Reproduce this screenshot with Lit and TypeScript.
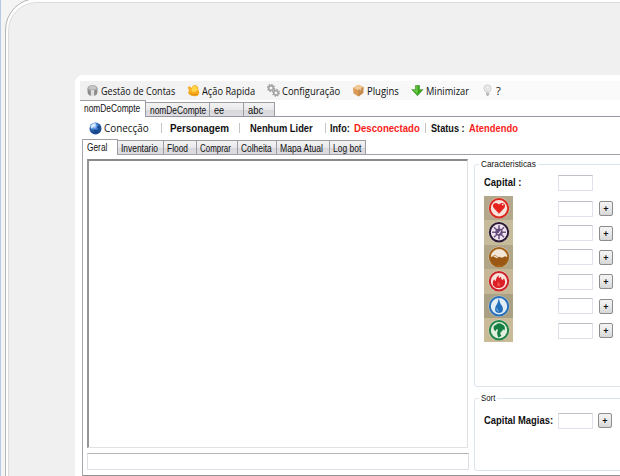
import { LitElement, html, svg, css } from "lit";
import { customElement, property } from "lit/decorators.js";
import { styleMap } from "lit/directives/style-map.js";

/* Single-line label condensed horizontally to a given width. */
@customElement("fit-label")
class FitLabel extends LitElement {
  @property({ type: Number }) w = 0;
  @property() text = "";
  @property({ type: Number }) scale = 1;
  static styles = css`
    :host { display: block; flex: none; }
    .box { display: block; white-space: nowrap; }
    .in { display: inline-block; transform-origin: 0 50%; }
  `;
  firstUpdated() {
    const el = this.renderRoot.querySelector(".in") as HTMLElement;
    this.scale = this.w / el.offsetWidth;
  }
  render() {
    return html`<span class="box" style=${styleMap({ width: this.w + "px" })}
      ><span class="in" style=${styleMap({ transform: `scaleX(${this.scale})` })}>${this.text}</span></span>`;
  }
}

const label = (text: string, w: number) => html`<fit-label .text=${text} .w=${w}></fit-label>`;

const menuIcons: Record<string, unknown> = {
  head: svg`<path d="M1.200 5.500Q1.500 1 6.500 1T11.800 5.500L11.300 9.500Q10 11.500 8.300 12L8.300 7H4.700V12Q3 11.500 1.700 9.500Z" fill="#a2a2a2"/><path d="M2.500 4.500Q3.500 1.600 6.500 1.600T10.500 4.500L8.500 5.500H4.500Z" fill="#c6c6c6"/><path d="M4.700 6H8.300V12H4.700Z" fill="#dedede"/><path d="M2 6.500H4.700V11.500L2.300 10ZM8.300 6.500H11V10L8.300 11.500Z" fill="#888"/>`,
  hand: svg`<path d="M1 3.500Q1.500 1.500 3 2.500L4.500 4Q5.500 1 8 1 11.500 1.500 11.300 5.500L12.300 8.500Q12 12 8 12.200 4 12.300 2.500 10.500L.8 8.700Q.8 7.800 2 7.500Z" fill="#f6a91f"/><path d="M4.500 6Q5 1.800 8 1.800 10.800 2.500 10.500 6 8.500 8.500 5.500 8Z" fill="#ffd54a"/><path d="M1.800 3.500 4 6V8.500Z" fill="#ffc83c"/><path d="M3 9.800Q6 12 11 10" stroke="#dd8a08" fill="none"/>`,
  gear: svg`<g fill="#e2e2e2" stroke="#a4a4a4"><circle cx="4" cy="4" r="2.400" stroke-width="1.600"/><circle cx="4" cy="4" r="3.600" fill="none" stroke-dasharray="1.500 1.300" stroke-width="1.200"/><circle cx="9" cy="8.800" r="2.300" stroke-width="1.600"/><circle cx="9" cy="8.800" r="3.400" fill="none" stroke-dasharray="1.400 1.270" stroke-width="1.200"/></g><circle cx="4" cy="4" r="1" fill="#fff"/><circle cx="9" cy="8.800" r=".9" fill="#fff"/>`,
  box: svg`<path d="M1 4 6 .8 11.500 3 11.200 9 6.500 12.400 1.500 9.500Z" fill="#d89a55"/><path d="M1 4 6 .8 11.500 3 6.300 6.200Z" fill="#f1c78e"/><path d="M6.300 6.200 11.500 3 11.200 9 6.500 12.400Z" fill="#c68a4d"/><path d="M3.300 2.600 8.800 4.800V6.500" stroke="#e9d0a8" fill="none"/>`,
  down: svg`<path d="M4.500 1.500H8.500V5.800L12 5.500 6.500 11.800 .8 5.500 4.500 5.800Z" fill="#36a51c" stroke="#4c9b3b" stroke-width=".7"/><path d="M5.200 2.200H6.500V9.800L2.500 6.300H5.200Z" fill="#73cf4c"/>`,
  bulb: svg`<path d="M6.500 1Q10 1 10 4.400 10 6 8.500 8H4.800Q3 6 3 4.400 3 1 6.500 1Z" fill="#efefef" stroke="#cdcdcd"/><path d="M5 8.500H8.200V10.800L7 12H6.200L5 10.800Z" fill="#bababa"/><path d="M5 3.500 6.500 7 8 3.500" stroke="#dadada" fill="none"/>`,
};
const globe = svg`<defs><radialGradient id="g" cx=".4" cy=".3"><stop offset="0" stop-color="#d6eaff"/><stop offset=".5" stop-color="#4688d9"/><stop offset="1" stop-color="#1b4d92"/></radialGradient></defs><circle cx="6.500" cy="6.500" r="6" fill="url(#g)"/><path d="M1.500 5Q3 1 6.500 1.300L6.500 3.500 4 4.500 3 7Z" fill="#dceeff"/><path d="M8 4 11.500 4.500 10.500 7 8.500 6Z" fill="#1d4a8f"/><path d="M4.500 7.500 8.500 8.500 7.500 11 5.500 10.500Z" fill="#1a4182"/>`;

const menu: [string, string, number, number, number][] = [
  // icon, text, text width, icon-text gap, space to the next entry
  ["head", "Gestão de Contas", 74, 2, 12],
  ["hand", "Ação Rapida", 53, 2, 12],
  ["gear", "Configuração", 58, 2, 12],
  ["box", "Plugins", 32, 2, 12],
  ["down", "Minimizar", 43, 2, 12],
  ["bulb", "?", 5, 2, 0],
];
const accounts: [string, number, number][] = [["nomDeCompte", 66, 56], ["nomDeCompte", 64, 56], ["ee", 34, 10], ["abc", 31, 15]];
const pages: [string, number, number][] = [["Geral", 35, 20], ["Inventario", 46, 37], ["Flood", 33, 21], ["Comprar", 41, 31], ["Colheita", 39, 31], ["Mapa Atual", 53, 43], ["Log bot", 36, 28]];

const stats: [string, string, string, unknown][] = [
  ["#b3a88b", "#d92a20", "#f9e3dd", svg`<path d="M12 17.500 6.500 11.500Q5 8.500 7.500 7 10.200 6 12 8.200 13.800 6 16.500 7 19 8.500 17.500 11.500Z" fill="#e6221e"/><path d="M15 8.200 16.500 8.800" stroke="#fff" stroke-width="1.300"/>`],
  ["#c6bb9b", "#2b1a36", "#eee4ed", svg`<g stroke="#71578a" stroke-width="1.600"><path d="M12 5V19M5 12H19M7 7 17 17M17 7 7 17"/></g><circle cx="12" cy="12" r="3.600" fill="#65497a"/><path d="M10.500 13.500Q13 14 13.500 10.500" stroke="#fff" fill="none"/>`],
  ["#b2a689", "#a36118", "#f2e6d6", svg`<path d="M3.500 12 6 10.800 8 12 10 13 12 11.500 15 12.500 18 11 20.500 12Q20 20.500 12 20.500T3.500 12Z" fill="#9b5714"/><path d="M5 11.500 8 10 11 12" stroke="#c99865" fill="none"/>`],
  ["#c5b795", "#cc2229", "#f8e2dc", svg`<path d="M6 16Q5 12.500 7 10L8.500 12Q8.500 9 11.500 6L12 9 14 7.500Q14 10 15.500 11L17 9Q19.500 14 16 17.500 12 20 8 18Z" fill="#dc1f26"/><path d="M10.500 17Q9.500 14.500 11.500 12L12 14 13 13.500Q13.500 16 12.500 17Z" fill="#ec5048"/>`],
  ["#aaa184", "#2870b9", "#e3edf5", svg`<path d="M11.800 4Q12.500 9 15.500 12.500 17.500 18.500 12 18.700 6.500 18.500 8.500 12.500 11 9 11.800 4Z" fill="#236fbd"/><path d="M9.800 14Q9.500 16.800 12 17.200" stroke="#7fb5e4" stroke-width="1" fill="none"/>`],
  ["#cabb98", "#218348", "#e2efdf", svg`<path d="M7 11.500Q5.500 7.500 9 6.500 12 4 15 6 19 7.500 17.500 12L15.500 11Q16 13.500 13.800 13.500 12.500 15.500 14.500 17.500L11.500 19.500Q9 15 11 12L10 10.500 8.500 13Z" fill="#157f43"/>`],
];

@customElement("app-root")
class AppRoot extends LitElement {
  static styles = css`
    * { box-sizing: border-box; }
    :host { display: block; width: 620px; height: 476px; overflow: hidden; background: #f4f4f4; border-left: 1px solid #b8c9e4; font: 10px/12px "Liberation Sans", Arial, sans-serif; color: #111; }
    svg { display: block; flex: none; }
    .shell { margin: -2px -40px 0 4px; height: 520px; border: 1px solid #b4b4b4; border-radius: 32px 0 0 0; background: #fdfdfd; padding: 3px 0 0 2px; }
    .body { height: 516px; border: 1px solid #dcdcdc; border-radius: 29px 0 0 0; background: #f0f0f0; padding: 72px 0 0 66px; }
    .win { height: 420px; background: #fff; border-radius: 8px 0 0 0; padding: 6px 0 0 5px; width: 600px; }
    .menu { height: 19px; background: linear-gradient(90deg, #f0f0f0, #fafafa 400px); display: flex; align-items: center; padding-left: 6px; font: 11px/19px "Open Sans", "Noto Sans", sans-serif; color: #111; }
    .entry { display: flex; align-items: center; }
    .tabs { display: flex; align-items: flex-end; height: 17px; border-bottom: 1px solid #9598a0; }
    .tab { height: 14px; display: flex; align-items: center; padding-left: 4px; border: 1px solid #9c9da3; border-left-width: 0; border-bottom: 0; background: linear-gradient(#f3f3f3, #e9e9ec 50%, #d8d8db 55%, #dedee2); padding-top: 2px; }
    .tab.on { height: 17px; margin-bottom: -1px; background: #fff; padding: 0 0 1px 4px; }
    .bar { height: 22px; display: flex; align-items: center; padding-left: 9px; font-size: 10.500px; }
    .conn { font: 11px/14px "Open Sans", sans-serif; }
    .b { font-weight: bold; }
    .red { font-weight: bold; color: #fa1d20; }
    .rule { width: 1px; height: 10px; background: #c4c4c4; flex: none; }
    .inner { margin-left: 2px; border-left: 1px solid #a7a7af; height: 337px; border-bottom: 1px solid #909090; }
    .inner .tabs { height: 16px; border-bottom-color: #9fa0a8; }
    .inner .tab { height: 14px; padding-left: 3px; }
    .inner .tab.on { height: 16px; padding: 1px 0 1px 4px; }
    .cols { display: flex; padding: 4px 0 0 4px; }
    .left { width: 382px; flex: none; }
    .log { height: 289px; border: 1px solid #e1e1e1; border-top: 2px solid #8a8a8a; border-left: 2px solid #959595; width: 381px; }
    .line { margin-top: 5px; height: 17px; border: 1px solid #dcdfe6; border-top-color: #b4b4b4; }
    .right { margin-left: 5px; width: 180px; flex: none; padding-top: 5px; }
    .group { border: 1px solid #dce5ec; border-radius: 3px; padding-left: 9px; }
    .legend { margin: -7px 0 0 -5px; width: max-content; background: #fff; padding: 0 2px; font-size: 9.500px; line-height: 12px; }
    .g1 { height: 223px; }
    .g2 { height: 73px; margin-top: 11px; }
    .row { display: flex; align-items: center; }
    .field { width: 35px; height: 16px; border: 1px solid #dfe2ea; border-top-color: #bfc1c8; border-radius: 1px; flex: none; }
    .plus { width: 14px; height: 15px; border: 1px solid #8c8c8c; border-radius: 2px; background: linear-gradient(#f4f4f4, #e9e9e9 50%, #d7d7d7); font: bold 9px/14px "Liberation Sans", sans-serif; text-align: center; margin-left: 6px; flex: none; }
    .name { width: 74px; flex: none; font-weight: bold; font-size: 10.500px; }
    .cap { height: 17px; margin-top: 4px; }
    .cap .name { padding-bottom: 2px; }
    .stats { margin-top: 5px; }
    .stat { height: 24.400px; }
    .stat .art { margin-right: 45px; }
    .stat .field, .stat .plus { margin-top: 1px; }
    .magic { margin-top: 8px; height: 17px; }
    .magic .name { padding-bottom: 1px; }
    .magic .plus { margin-left: 5px; }
  `;
  tabs(list: [string, number, number][]) {
    return html`<div class="tabs">${list.map(([t, w, tw], i) => html`
      <div class="tab ${i ? "" : "on"}" style=${styleMap({ width: w + "px" })}>${label(t, tw)}</div>`)}</div>`;
  }
  gap(w: number) {
    return html`<span style=${styleMap({ width: w + "px" })}></span>`;
  }
  render() {
    return html`<div class="shell"><div class="body"><div class="win">
      <div class="menu">${menu.map(([ic, t, w, g, n]) => html`
        <div class="entry"><svg width="13" height="13" viewBox="0 0 13 13">${menuIcons[ic]}</svg>${this.gap(g)}${label(t, w)}${this.gap(n)}</div>`)}</div>
      ${this.tabs(accounts)}
      <div class="bar">
        <svg width="13" height="13" viewBox="0 0 13 13">${globe}</svg>${this.gap(2)}
        <span class="conn">${label("Conecção", 45)}</span>${this.gap(12)}<i class="rule"></i>${this.gap(8)}
        <span class="b">${label("Personagem", 59)}</span>${this.gap(10)}<i class="rule"></i>${this.gap(10)}
        <span class="b">${label("Nenhum Lider", 63)}</span>${this.gap(12)}<i class="rule"></i>${this.gap(4)}
        <span class="b">${label("Info:", 20)}</span>${this.gap(4)}
        <span class="red">${label("Desconectado", 66)}</span>${this.gap(5)}<i class="rule"></i>${this.gap(5)}
        <span class="b">${label("Status :", 34)}</span>${this.gap(4)}
        <span class="red">${label("Atendendo", 49)}</span>
      </div>
      <div class="inner">
        ${this.tabs(pages)}
        <div class="cols">
          <div class="left"><div class="log"></div><div class="line"></div></div>
          <div class="right">
            <div class="group g1">
              <div class="legend">${label("Caracteristicas", 55)}</div>
              <div class="row cap"><div class="name">${label("Capital :", 37)}</div><div class="field"></div></div>
              <div class="stats">${stats.map(([bg, ring, fill, art]) => html`
                <div class="row stat"><svg class="art" width="29" height="24.400" viewBox="0 0 29 24.400">
                  <rect width="29" height="25" fill=${bg}></rect>
                  <g transform="translate(3 .2)"><circle cx="12" cy="12" r="10.600" fill="#fff" opacity=".45"></circle><circle cx="12" cy="12" r="9.200" fill=${fill} stroke=${ring} stroke-width="2"></circle>${art}</g>
                </svg><div class="field"></div><div class="plus">+</div></div>`)}</div>
            </div>
            <div class="group g2">
              <div class="legend">${label("Sort", 14)}</div>
              <div class="row magic"><div class="name">${label("Capital Magias:", 69)}</div><div class="field"></div><div class="plus">+</div></div>
            </div>
          </div>
        </div>
      </div>
    </div></div></div>`;
  }
}
